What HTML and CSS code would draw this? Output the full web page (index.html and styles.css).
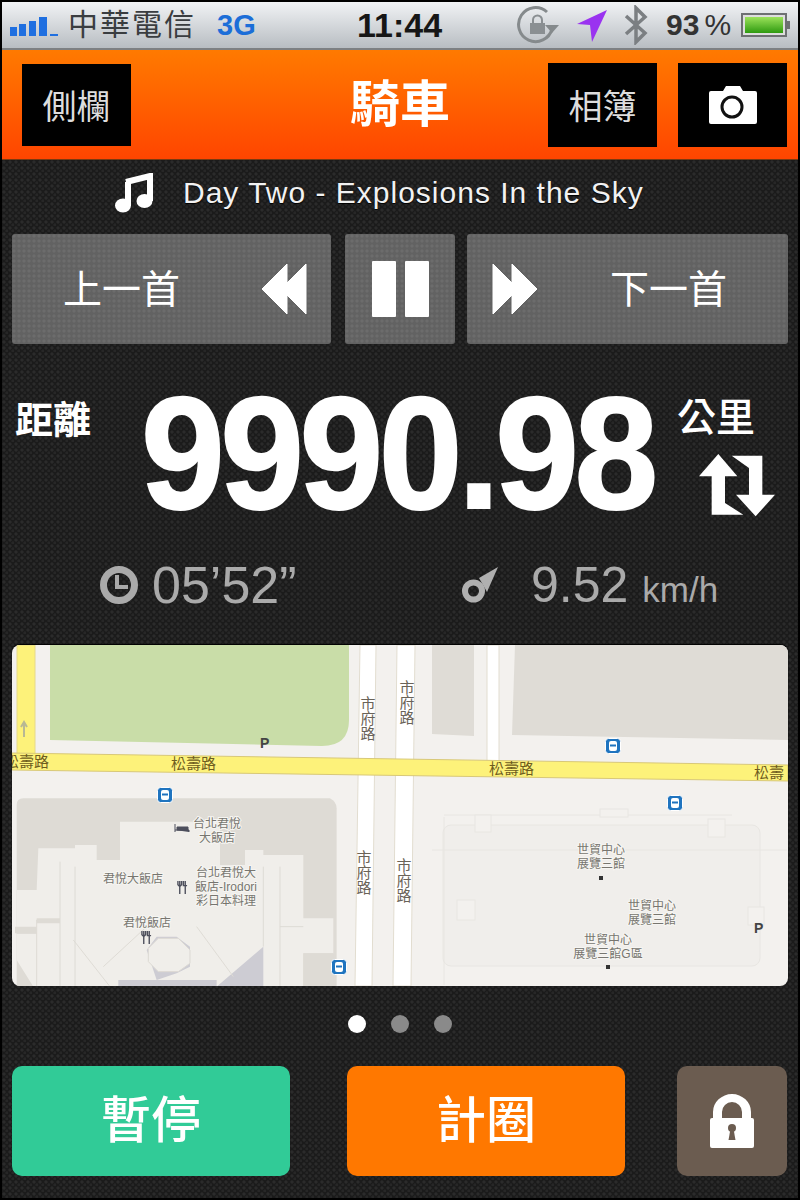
FILE: index.html
```html
<!DOCTYPE html>
<html lang="zh-Hant">
<head>
    <meta charset="UTF-8">
    <meta name="viewport" content="width=device-width, initial-scale=1.0">
    <title>騎車</title>
    <link rel="stylesheet" href="styles.css">
</head>
<body>
    <div class="phone">
        <div class="status">
            <svg class="signal" width="48" height="22" viewBox="0 0 48 22">
                <rect x="0" y="12" width="7" height="9" fill="#1f6fe0"/>
                <rect x="9" y="9" width="7" height="12" fill="#1f6fe0"/>
                <rect x="19" y="6" width="7" height="15" fill="#1f6fe0"/>
                <rect x="29" y="2" width="8" height="19" fill="#1f6fe0"/>
                <rect x="40" y="19" width="8" height="2" fill="#1f6fe0"/>
            </svg>
            <span class="carrier">中華電信</span>
            <span class="net">3G</span>
            <span class="clock">11:44</span>
            <svg class="lock-rot" width="42" height="40" viewBox="0 0 42 40">
                <path d="M30 7A17 17 0 1 0 35 24" fill="none" stroke="#858a8c" stroke-width="3"/>
                <path d="M28 20h14l-7 8z" fill="#858a8c"/>
                <rect x="13" y="18" width="15" height="11" fill="#8a8f92"/>
                <path d="M16 18v-3a4.500 4.500 0 0 1 9 0v3" fill="none" stroke="#8a8f92" stroke-width="2"/>
            </svg>
            <svg class="arrow" width="32" height="33" viewBox="0 0 32 33">
                <path d="M31 1L1 15 14 16 16 33z" fill="#9a33f0"/>
            </svg>
            <svg class="bt" width="24" height="40" viewBox="0 0 24 40">
                <path d="M2 11L21 28 12 37V3l9 9L2 29" fill="none" stroke="#7b7f82" stroke-width="3.500"/>
            </svg>
            <span class="pct">93<i>%</i></span>
            <div class="batt"><div class="batt-fill"></div></div>
        </div>

        <div class="header">
            <div class="head-left"><button class="head-btn side-btn">側欄</button></div>
            <h1 class="title">騎車</h1>
            <div class="head-right">
                <button class="head-btn">相簿</button>
                <button class="head-btn">
                    <svg width="48" height="40" viewBox="0 0 48 40">
                        <path d="M2 6h12l3-5h14l3 5h12a2 2 0 0 1 2 2v29a2 2 0 0 1-2 2H2a2 2 0 0 1-2-2V8a2 2 0 0 1 2-2z" fill="#fff"/>
                        <circle cx="23" cy="22" r="10" fill="none" stroke="#111" stroke-width="3"/>
                    </svg>
                </button>
            </div>
        </div>

        <div class="content">
            <div class="track">
                <svg width="38" height="40" viewBox="0 0 38 40">
                    <path d="M11 9L35 3V28" fill="none" stroke="#fff" stroke-width="6"/>
                    <ellipse cx="8" cy="32.500" rx="8" ry="7" fill="#fff"/>
                    <ellipse cx="29.500" cy="28" rx="8" ry="7" fill="#fff"/>
                    <path d="M13 9V33" stroke="#fff" stroke-width="6"/>
                </svg>
                <span class="song">Day Two - Explosions In the Sky</span>
            </div>

            <div class="controls">
                <div class="ctl ctl-prev">
                    <span>上一首</span>
                    <svg width="46" height="52" viewBox="0 0 46 52">
                        <path d="M1 26L26 1V51zM20 26L45 1V51z" fill="#fff" stroke="#fff" stroke-width="1" stroke-linejoin="round"/>
                    </svg>
                </div>
                <div class="ctl ctl-pause">
                    <div class="bar"></div>
                    <div class="bar"></div>
                </div>
                <div class="ctl ctl-next">
                    <svg width="46" height="52" viewBox="0 0 46 52">
                        <path d="M45 26L20 1V51zM26 26L1 1V51z" fill="#fff" stroke="#fff" stroke-width="1" stroke-linejoin="round"/>
                    </svg>
                    <span>下一首</span>
                </div>
            </div>

            <div class="distance">
                <div class="dist-label">距離</div>
                <div class="dist-value">9990.98</div>
                <div class="dist-unit">
                    <div class="unit-text">公里</div>
                    <svg width="76" height="64" viewBox="897 700 228 192">
                        <path d="M955 703L1012 770H975V850L1030 885H935V770H897z" fill="#fff"/>
                        <path d="M1067 890L1008 825H1047V745L995 708H1087V825H1125z" fill="#fff"/>
                    </svg>
                </div>
            </div>

            <div class="stats">
                <div class="stat stat-time">
                    <svg width="38" height="38" viewBox="0 0 38 38">
                        <circle cx="19" cy="19" r="15.500" fill="none" stroke="#aaa" stroke-width="7"/>
                        <path d="M17 9v12h11" fill="none" stroke="#aaa" stroke-width="4"/>
                    </svg>
                    <span>05’52”</span>
                </div>
                <div class="stat stat-speed">
                    <svg width="36" height="37" viewBox="0 0 36 37">
                        <circle cx="11.500" cy="24" r="8.500" fill="none" stroke="#b0b0b0" stroke-width="6"/>
                        <path d="M36 0L17 11 25 25z" fill="#b0b0b0"/>
                    </svg>
                    <span class="speed-num">9.52</span>
                    <span class="speed-unit">km/h</span>
                </div>
            </div>

            <div class="map">
                <svg width="776" height="341" viewBox="0 0 776 341">
                    <defs>
                        <symbol id="bus" viewBox="0 0 16 16">
                            <rect x="0.500" y="0.500" width="15" height="15" rx="3" fill="#1f74bf" stroke="#fff"/>
                            <rect x="4" y="3" width="8" height="10" rx="2" fill="#fff"/>
                            <rect x="5" y="6.500" width="6" height="2" fill="#1f74bf"/>
                        </symbol>
                        <symbol id="fork" viewBox="0 0 12 14">
                            <path d="M3 0v14M9 0v14M1 0v4l2 2 2-2V0M7 0v5h4" fill="none" stroke="#4d4f5c" stroke-width="1.500"/>
                        </symbol>
                    </defs>

                    <rect width="776" height="341" fill="#f3f1ee"/>
                    <path d="M38 0H337V75Q337 101 310 101L38 95z" fill="#c9dda8"/>
                    <path d="M420 0H462V91L420 89z" fill="#dfdcd6"/>
                    <path d="M503 0H776V95L500 90z" fill="#dfdcd6"/>

                    <path d="M348 0H364L360 341H343z" fill="#fff" stroke="#e2ddd0"/>
                    <path d="M385 0H403L399 341H381z" fill="#fff" stroke="#e2ddd0"/>
                    <path d="M475 0H487V116H475z" fill="#fff" stroke="#e2ddd0"/>
                    <path d="M5 0H23V110H5z" fill="#fdf27a" stroke="#e6d98a"/>
                    <path d="M0 108L776 120V136L0 125z" fill="#fdf27a" stroke="#d8c878"/>
                    <path d="M12 92v-14M9 82l3-5 3 5" fill="none" stroke="#b8b894" stroke-width="2"/>

                    <g transform="translate(-12 135) scale(0.3333)">
                        <path d="M50 75Q50 55 70 55H990Q1010 65 1010 85V620H50z" fill="#dedbd5"/>
                        <path d="M115 205H225V195H290V240H360V125H660V255H735V210H790V225H910V415H1000V520H910V620H100L50 540V330H110z" fill="#f0eeea"/>
                        <path d="M650 620L790 500V620zM355 600H650V620H355zM440 510L470 470H530L570 500 570 560 530 580 470 600z" fill="#cdccd3"/>
                        <path d="M445 505L475 475H535L570 510V550L535 575H475L445 545z" fill="#f0eeea" stroke="#dcd9d3" stroke-width="3"/>
                        <path d="M180 245V620M225 260V620M790 260V500M840 260V620M220 480L330 620M310 560L440 440M590 440L700 590M50 460H110M840 440H910M110 420H180M110 620V420" fill="none" stroke="#dedbd5" stroke-width="3"/>
                        <path d="M910 520H1000V620H910z" fill="#dedbd5"/>
                        <path d="M45 440H110V460H45zM110 415H180V430H110z" fill="#dedbd5"/>
                    </g>

                    <g fill="none" stroke="#e8e6e2">
                        <rect x="431" y="180" width="317" height="141" rx="8" fill="#f0eeeb"/>
                        <path d="M420 205H775M432 170H720M432 172V340"/>
                        <rect x="463" y="170" width="16" height="17" fill="#f3f1ee"/>
                        <rect x="696" y="174" width="17" height="18" fill="#f3f1ee"/>
                        <rect x="445" y="255" width="18" height="20" fill="#f3f1ee"/>
                        <rect x="736" y="262" width="16" height="18" fill="#f3f1ee"/>
                        <rect x="588" y="164" width="28" height="8" fill="#f3f1ee"/>
                    </g>

                    <text class="road" x="-8" y="122">松壽路</text>
                    <text class="road" x="159" y="124">松壽路</text>
                    <text class="road" x="477" y="129">松壽路</text>
                    <text class="road" x="742" y="133">松壽</text>

                    <text class="vroad" y="64"><tspan x="356">市</tspan><tspan x="356" dy="15">府</tspan><tspan x="356" dy="15">路</tspan></text>
                    <text class="vroad" y="48"><tspan x="395">市</tspan><tspan x="395" dy="15">府</tspan><tspan x="395" dy="15">路</tspan></text>
                    <text class="vroad" y="218"><tspan x="352">市</tspan><tspan x="352" dy="15">府</tspan><tspan x="352" dy="15">路</tspan></text>
                    <text class="vroad" y="226"><tspan x="392">市</tspan><tspan x="392" dy="15">府</tspan><tspan x="392" dy="15">路</tspan></text>

                    <text class="poi" x="205" y="183">台北君悅</text>
                    <text class="poi" x="205" y="197">大飯店</text>
                    <text class="poi" x="121" y="238">君悅大飯店</text>
                    <text class="poi" x="214" y="232">台北君悅大</text>
                    <text class="poi" x="214" y="246">飯店-Irodori</text>
                    <text class="poi" x="214" y="260">彩日本料理</text>
                    <text class="poi" x="135" y="282">君悅飯店</text>
                    <text class="poi" x="589" y="209">世貿中心</text>
                    <text class="poi" x="589" y="223">展覽三館</text>
                    <text class="poi" x="640" y="265">世貿中心</text>
                    <text class="poi" x="640" y="279">展覽三館</text>
                    <text class="poi" x="596" y="299">世貿中心</text>
                    <text class="poi" x="596" y="313">展覽三館G區</text>
                    <text class="park" x="248" y="103">P</text>
                    <text class="park" x="742" y="288">P</text>

                    <use href="#bus" x="593" y="93" width="16" height="16"/>
                    <use href="#bus" x="655" y="150" width="16" height="16"/>
                    <use href="#bus" x="145" y="142" width="16" height="16"/>
                    <use href="#bus" x="319" y="314" width="16" height="16"/>
                    <use href="#fork" x="165" y="236" width="11" height="13"/>
                    <use href="#fork" x="129" y="286" width="11" height="13"/>
                    <path d="M163 179v8M163 185h14v2M165 182h11v3h-11z" fill="#4d4f5c" stroke="#4d4f5c"/>
                    <rect x="587" y="231" width="4" height="4" fill="#333"/>
                    <rect x="594" y="320" width="4" height="4" fill="#333"/>
                </svg>
            </div>

            <div class="dots">
                <div class="dot dot-on"></div>
                <div class="dot"></div>
                <div class="dot"></div>
            </div>

            <div class="actions">
                <button class="act act-pause"><span>暫停</span></button>
                <button class="act act-lap"><span>計圈</span></button>
                <button class="act act-lock">
                    <svg width="46" height="56" viewBox="0 0 46 56">
                        <path d="M3 25a2 2 0 0 0-2 2v26a2 2 0 0 0 2 2h40a2 2 0 0 0 2-2V27a2 2 0 0 0-2-2h-1V19a19 18 0 0 0-38 0v6zM13 25V19a10 10 0 0 1 20 0v6z" fill="#fff" fill-rule="evenodd"/>
                        <circle cx="23" cy="35" r="4" fill="#6b5c50"/>
                        <path d="M21.500 36h3l2 11h-7z" fill="#6b5c50"/>
                    </svg>
                </button>
            </div>
        </div>
    </div>
</body>
</html>
```

FILE: styles.css
```css
* {
    box-sizing: border-box;
}
body {
    margin: 0;
    font-family: "Liberation Sans", "Noto Sans CJK TC", sans-serif;
    background: #000;
}
button {
    font-family: inherit;
    border: none;
    padding: 0;
}
.phone {
    width: 800px;
    height: 1200px;
    border: 2px solid #000;
    overflow: hidden;
}

/* status bar */
.status {
    height: 48px;
    display: flex;
    align-items: center;
    padding-left: 8px;
    background: linear-gradient(#f1f3f5, #b8bdc2);
    border-bottom: 2px solid #7d8083;
}
.signal {
    margin-top: 2px;
}
.carrier {
    margin-left: 10px;
    font-size: 30px;
    letter-spacing: 2px;
    color: #3a3d40;
    line-height: 1;
}
.net {
    margin-left: 21px;
    font-size: 29px;
    font-weight: bold;
    color: #1c6ed8;
    width: 140px;
}
.clock {
    font-size: 34px;
    font-weight: bold;
    color: #161616;
    width: 160px;
}
.lock-rot {
    margin-right: 17px;
}
.arrow {
    margin-right: 16px;
}
.bt {
    margin-right: 18px;
}
.pct {
    font-size: 30px;
    font-weight: bold;
    color: #333;
    width: 75px;
}
.pct i {
    font-style: normal;
    font-weight: normal;
    margin-left: 5px;
}
.batt {
    width: 46px;
    height: 24px;
    border: 2px solid #6d7072;
    padding: 2px;
    background: #ddd;
    position: relative;
}
.batt::after {
    content: "";
    position: absolute;
    right: -5px;
    top: 6px;
    width: 3px;
    height: 8px;
    background: #6d7072;
}
.batt-fill {
    width: 100%;
    height: 100%;
    background: linear-gradient(#9be25a, #2e9a10);
}

/* header */
.header {
    height: 110px;
    display: grid;
    grid-template-columns: 1fr auto 1fr;
    align-items: center;
    background: linear-gradient(#ff7a00, #ff4500);
    border-bottom: 1px solid #7a3a10;
}
.head-left {
    padding-left: 20px;
}
.head-right {
    display: flex;
    justify-content: flex-end;
    gap: 21px;
    padding-right: 11px;
}
.head-btn {
    width: 109px;
    height: 84px;
    background: #000;
    color: #ddd;
    font-size: 34px;
    display: flex;
    align-items: center;
    justify-content: center;
}
.side-btn {
    height: 82px;
}
.title {
    margin: 0;
    font-size: 50px;
    font-weight: bold;
    color: #fff;
    line-height: 1;
}

/* main area */
.content {
    height: 1038px;
    background-color: #1b1b1b;
    background-image:
        radial-gradient(circle at 2px 2px, #2b2b2b 1.400px, transparent 1.800px),
        radial-gradient(circle at 5px 5px, #272727 1.400px, transparent 1.800px);
    background-size: 6px 6px;
}
.track {
    height: 66px;
    margin-bottom: 8px;
    display: flex;
    align-items: center;
    padding-left: 113px;
    gap: 30px;
}
.song {
    font-size: 30px;
    color: #f2f2f2;
    letter-spacing: 1px;
    text-shadow: 0 1px 1px #000;
}

.controls {
    height: 110px;
    margin: 0 10px;
    display: flex;
    color: #fff;
    font-size: 39px;
}
.ctl {
    display: flex;
    align-items: center;
    border-radius: 3px;
    background-color: #626262;
    background-image: radial-gradient(circle at 2px 2px, #6c6c6c 1.400px, transparent 1.800px);
    background-size: 5px 5px;
}
.ctl span {
    margin-top: -6px;
}
.ctl-prev {
    width: 319px;
    margin-right: 14px;
    justify-content: space-between;
    padding: 0 24px 0 51px;
}
.ctl-pause {
    width: 110px;
    margin-right: 12px;
    justify-content: center;
    gap: 9px;
}
.bar {
    width: 24px;
    height: 56px;
    background: #fff;
    border-radius: 1px;
}
.ctl-next {
    flex: 1;
    justify-content: space-between;
    padding: 0 61px 0 25px;
}

/* distance */
.distance {
    height: 140px;
    margin-top: 54px;
    padding-left: 13px;
    display: flex;
    color: #fff;
}
.dist-label {
    width: 126px;
    font-size: 38px;
    font-weight: bold;
    line-height: 44px;
}
.dist-value {
    width: 536px;
    font-size: 160px;
    font-weight: bold;
    letter-spacing: -4.700px;
    line-height: 110px;
    -webkit-text-stroke: 2px #fff;
    transform: scaleX(0.94);
    transform-origin: left center;
}
.dist-unit {
    display: flex;
    flex-direction: column;
}
.unit-text {
    font-size: 39px;
    line-height: 40px;
    font-weight: 500;
    margin-bottom: 15px;
}
.dist-unit svg {
    margin-left: 22px;
}

.stats {
    height: 40px;
    margin-top: 27px;
    padding-left: 98px;
    display: flex;
    align-items: center;
    color: #aaa;
}
.stat {
    display: flex;
    align-items: center;
}
.stat-time {
    width: 362px;
    gap: 14px;
    font-size: 52px;
}
.speed-num {
    margin-left: 33px;
    font-size: 50px;
}
.speed-unit {
    margin-left: 14px;
    font-size: 35px;
    margin-top: 10px;
}

/* map */
.map {
    height: 341px;
    margin: 40px 10px 0;
    border-radius: 8px;
    overflow: hidden;
    box-shadow: 0 -1px 1px #000;
}
.map svg {
    display: block;
}
.road {
    font-size: 15px;
    fill: #6e5c20;
}
.vroad {
    font-size: 15px;
    fill: #6a6358;
    text-anchor: middle;
}
.poi {
    font-size: 12px;
    fill: #77756f;
    stroke: #f6f5f2;
    stroke-width: 2px;
    paint-order: stroke;
    text-anchor: middle;
}
.park {
    font-size: 14px;
    font-weight: bold;
    fill: #444;
}

/* pager and bottom buttons */
.dots {
    height: 18px;
    margin-top: 29px;
    display: flex;
    justify-content: center;
    gap: 25px;
}
.dot {
    width: 18px;
    height: 18px;
    border-radius: 50%;
    background: #8a8a8a;
}
.dot-on {
    background: #fff;
}
.actions {
    height: 110px;
    margin: 33px 10px 0;
    display: flex;
}
.act {
    height: 110px;
    border-radius: 10px;
    color: #fff;
    font-size: 50px;
    font-weight: 500;
    display: flex;
    align-items: center;
    justify-content: center;
}
.act span {
    margin-top: -10px;
}
.act-pause {
    width: 278px;
    margin-right: 57px;
    background: #31cb97;
}
.act-lap {
    width: 278px;
    margin-right: 52px;
    background: #ff7800;
}
.act-lock {
    width: 110px;
    background: #6b5c50;
}
```
